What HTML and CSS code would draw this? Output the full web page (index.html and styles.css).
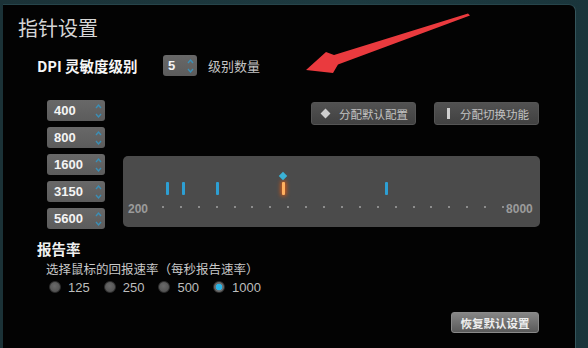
FILE: index.html
```html
<!DOCTYPE html>
<html lang="zh">
<head>
<meta charset="utf-8">
<link rel="stylesheet" href="styles.css">
</head>
<body>
<div class="window">
  <div class="title">指针设置</div>

  <div class="dpi-head">
    <span class="dpi-label">DPI 灵敏度级别</span>
    <div class="spin small"><span class="val">5</span>
      <svg class="arrows" width="7" height="16" viewBox="0 0 7 16"><path d="M1 5 L3.5 2 L6 5" /><path d="M1 11 L3.5 14 L6 11" /></svg>
    </div>
    <span class="count-label">级别数量</span>
  </div>

  <div class="dpi-body">
    <div class="levels">
      <div class="spin"><span class="val">400</span><svg class="arrows" width="7" height="16" viewBox="0 0 7 16"><path d="M1 5 L3.5 2 L6 5" /><path d="M1 11 L3.5 14 L6 11" /></svg></div>
      <div class="spin"><span class="val">800</span><svg class="arrows" width="7" height="16" viewBox="0 0 7 16"><path d="M1 5 L3.5 2 L6 5" /><path d="M1 11 L3.5 14 L6 11" /></svg></div>
      <div class="spin"><span class="val">1600</span><svg class="arrows" width="7" height="16" viewBox="0 0 7 16"><path d="M1 5 L3.5 2 L6 5" /><path d="M1 11 L3.5 14 L6 11" /></svg></div>
      <div class="spin"><span class="val">3150</span><svg class="arrows" width="7" height="16" viewBox="0 0 7 16"><path d="M1 5 L3.5 2 L6 5" /><path d="M1 11 L3.5 14 L6 11" /></svg></div>
      <div class="spin"><span class="val">5600</span><svg class="arrows" width="7" height="16" viewBox="0 0 7 16"><path d="M1 5 L3.5 2 L6 5" /><path d="M1 11 L3.5 14 L6 11" /></svg></div>
    </div>
    <div class="right">
      <div class="actions">
        <button class="btn"><span class="ico-diamond"></span>分配默认配置</button>
        <button class="btn"><span class="ico-bar"></span>分配切换功能</button>
      </div>
      <div class="graph">
        <span class="mark" style="left:42.5px"></span>
        <span class="mark" style="left:59.2px"></span>
        <span class="mark" style="left:93.2px"></span>
        <span class="mark active" style="left:158.8px"></span>
        <span class="diamond" style="left:157.3px"></span>
        <span class="mark" style="left:262.2px"></span>
        <div class="axis">
          <span class="axis-label">200</span>
          <div class="dots">
            <i></i><i></i><i></i><i></i><i></i><i></i><i></i><i></i><i></i><i></i>
            <i></i><i></i><i></i><i></i><i></i><i></i><i></i><i></i><i></i><i></i>
          </div>
          <span class="axis-label end">8000</span>
        </div>
      </div>
    </div>
  </div>

  <div class="rate">
    <div class="rate-title">报告率</div>
    <div class="rate-sub">选择鼠标的回报速率（每秒报告速率）</div>
    <div class="radios">
      <label class="radio"><span class="dot"></span>125</label>
      <label class="radio"><span class="dot"></span>250</label>
      <label class="radio"><span class="dot"></span>500</label>
      <label class="radio"><span class="dot on"></span>1000</label>
    </div>
  </div>

  <div class="footer">
    <button class="restore">恢复默认设置</button>
  </div>

  <svg class="pointer" width="588" height="100" viewBox="0 0 588 100">
    <polygon points="306,70 326,52 334,55 468,13.5 470,15.5 338,64.5 333,73" />
  </svg>
</div>
</body>
</html>
```

FILE: styles.css
```css
* { box-sizing: border-box; }
html, body { margin: 0; padding: 0; }
body {
  width: 588px;
  height: 348px;
  overflow: hidden;
  background: linear-gradient(90deg, #1b3237 0%, #1d3a40 60%, #1a353b 100%);
  font-family: "Noto Sans CJK SC", "Liberation Sans", sans-serif;
}
.window {
  position: relative;
  margin: 4px 12px 0 3px;
  height: 344px;
  background: #030303;
  border-top-right-radius: 7px;
  border-right: 1px solid #35555b;
  border-top: 1px solid #26444a;
  padding-top: 10px;
}
.title {
  margin-left: 15px;
  font-size: 20px;
  line-height: 26px;
  color: #d6d6d6;
}
.dpi-head {
  display: flex;
  align-items: center;
  margin: 14px 0 0 34px;
  height: 21px;
}
.dpi-label {
  font-size: 14.5px;
  font-weight: bold;
  color: #f6f6f6;
  width: 126px;
}
.count-label {
  margin-left: 11px;
  font-size: 13px;
  color: #c4c4c4;
}
.spin {
  display: flex;
  align-items: center;
  justify-content: space-between;
  width: 58px;
  height: 21px;
  border-radius: 3px;
  background: linear-gradient(#686868, #5c5c5c);
  padding: 0 3px 0 7px;
}
.spin.small { width: 34px; height: 21px; padding-left: 5px; }
.val {
  font-family: "Liberation Sans", sans-serif;
  font-weight: bold;
  font-size: 13px;
  color: #f4f4f4;
}
.arrows path {
  fill: none;
  stroke: #3b8fb7;
  stroke-width: 1.4;
}
.dpi-body {
  display: flex;
  margin: 24px 0 0 44px;
}
.levels {
  display: flex;
  flex-direction: column;
  gap: 6px;
}
.right {
  margin-left: 18px;
  width: 417px;
}
.actions {
  display: flex;
  justify-content: flex-end;
  gap: 18px;
  margin-top: 2px;
  padding-right: 1px;
}
.btn {
  display: flex;
  align-items: center;
  height: 23px;
  width: 105px;
  padding: 0 0 0 8px;
  border: 1px solid #555;
  border-radius: 3px;
  background: linear-gradient(#525252, #414141);
  font-family: "Noto Sans CJK SC", sans-serif;
  font-size: 11.5px;
  color: #c2c2c2;
}
.ico-diamond {
  width: 7px;
  height: 7px;
  background: #cfcfcf;
  transform: rotate(45deg);
  margin: 0 10px 0 2px;
}
.ico-bar {
  width: 3px;
  height: 11px;
  background: #d0d0d0;
  margin: 0 10px 0 4px;
}
.graph {
  position: relative;
  margin-top: 31px;
  height: 71px;
  border-radius: 5px;
  background: #4b4b4b;
  padding: 46px 0 0 5px;
}
.mark {
  position: absolute;
  top: 26px;
  width: 3px;
  height: 13px;
  border-radius: 1px;
  background: #2d9fd3;
}
.mark.active {
  background: #ffb060;
  box-shadow: 0 0 4px 1px #e25a10;
}
.diamond {
  position: absolute;
  top: 17px;
  width: 6px;
  height: 6px;
  background: #3ab2d6;
  transform: rotate(45deg);
}
.axis {
  display: flex;
  align-items: center;
  height: 14px;
}
.axis-label {
  font-family: "Liberation Sans", sans-serif;
  font-weight: bold;
  font-size: 12px;
  color: #9b9b9b;
}
.axis-label.end { margin-left: 2px; }
.dots {
  display: flex;
  justify-content: space-between;
  width: 342px;
  margin: 0 0 4px 14px;
}
.dots i {
  width: 2px;
  height: 2px;
  background: #8d8d8d;
}
.rate {
  margin: 10px 0 0 34px;
}
.rate-title {
  font-size: 14.5px;
  font-weight: bold;
  color: #f0f0f0;
  line-height: 20px;
}
.rate-sub {
  margin: 1px 0 0 9px;
  font-size: 12.5px;
  line-height: 17px;
  color: #c8c8c8;
}
.radios {
  display: flex;
  gap: 14px;
  margin: 1px 0 0 12px;
  height: 18px;
  align-items: center;
}
.radio {
  display: flex;
  align-items: center;
  gap: 7px;
  font-family: "Liberation Sans", sans-serif;
  font-size: 13px;
  color: #bdbdbd;
}
.radio .dot {
  width: 12px;
  height: 12px;
  border-radius: 50%;
  background: radial-gradient(circle at 45% 40%, #6a6a6a, #4a4a4a);
  border: 1px solid #2e2e2e;
}
.radio .dot.on {
  background: radial-gradient(circle, #2bb5e6 0 3px, #6a6a6a 3.6px);
}
.footer {
  display: flex;
  justify-content: flex-end;
  margin: 16px 36px 0 0;
}
.restore {
  width: 88px;
  height: 21px;
  padding: 0;
  border: 1px solid #8a8a8a;
  border-radius: 3px;
  background: linear-gradient(#868686, #5a5a5a);
  font-family: "Noto Sans CJK SC", sans-serif;
  font-size: 11.5px;
  font-weight: bold;
  color: #eeeeee;
}
.pointer {
  position: absolute;
  left: -3px;
  top: -5px;
}
.pointer polygon { fill: #ea3a3e; }
```
